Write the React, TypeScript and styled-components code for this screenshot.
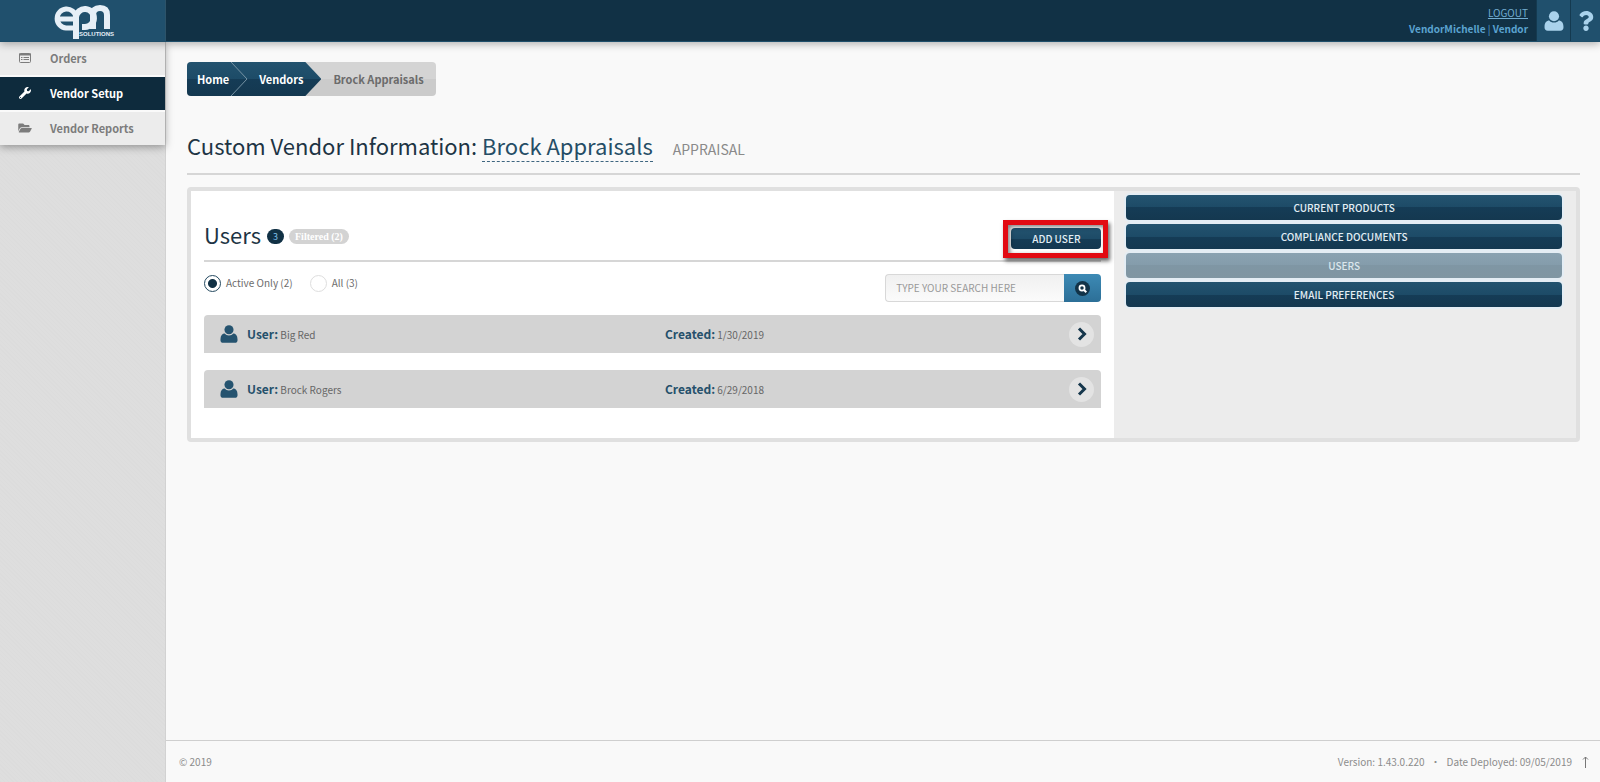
import React from "react";
import styled, { createGlobalStyle, css } from "styled-components";
import { FaWrench, FaFolderOpen, FaQuestion } from "react-icons/fa";

const GlobalStyle = createGlobalStyle`
  *, *::before, *::after { box-sizing: border-box; }
  body {
    margin: 0;
    background: #f9f9f9;
    color: #6c6c6c;
    font-family: "Noto Sans CJK SC", "Open Sans", sans-serif;
    font-size: 10px;
    line-height: 16px;
  }
  a { color: inherit; text-decoration: none; }
  button, input { font: inherit; }
  button { cursor: pointer; }
  h1, h2, ul, ol, p { margin: 0; padding: 0; font-weight: 400; }
  ul, ol { list-style: none; }
`;

const glossy = css`
  background: linear-gradient(#23536f, #1d4b67 50%, #153c56 50%, #143850);
`;

const Page = styled.div`
  display: flex;
  flex-direction: column;
  min-height: 100vh;
`;

const Header = styled.header`
  position: relative;
  z-index: 1;
  display: flex;
  height: 42px;
  background: #113145;
  border-bottom: 1px solid #1e4e6a;
  box-shadow: 0 2px 8px rgba(0, 0, 0, 0.3);
`;

const Brand = styled.a`
  display: flex;
  justify-content: center;
  width: 166px;
  background: #20506d;
  border-right: 1px solid #2d5369;
`;

const Account = styled.div`
  margin-left: auto;
  padding: 5px 8px 0 0;
  text-align: right;
  color: #5ba3d0;
`;

const Logout = styled.a`
  display: block;
  text-decoration: underline;
  color: #72acd0;
`;

const AccountName = styled.p`
  b { font-weight: 700; }
`;

const HeaderButton = styled.button<{ $wide?: boolean }>`
  display: flex;
  align-items: center;
  justify-content: center;
  width: ${(p) => (p.$wide ? "34px" : "30px")};
  padding: 0;
  border: 0;
  border-left: 1px solid #143a50;
  background: #20506d;
  color: #a9d2ec;
`;

const Body = styled.div`
  display: flex;
  flex: 1;
`;

const Sidebar = styled.aside`
  width: 166px;
  background: repeating-linear-gradient(45deg, #dcdcdc 0 1px, #dedede 1px 3px);
  border-right: 1px solid #d2d2d2;
`;

const Nav = styled.nav`
  display: flex;
  flex-direction: column;
  gap: 2px;
  background: #fafafa;
  box-shadow: 0 2px 8px rgba(0, 0, 0, 0.35);
`;

const NavItem = styled.a<{ $active?: boolean }>`
  display: flex;
  align-items: center;
  gap: 18px;
  height: 33px;
  padding: 0 0 2px 18px;
  font-size: 11px;
  font-weight: 700;
  background: ${(p) => (p.$active ? "#0e2b3d" : "#ececec")};
  color: ${(p) => (p.$active ? "#fff" : "#7c7c7c")};
  svg { width: 14px; }
`;

const Main = styled.div`
  display: flex;
  flex-direction: column;
  flex: 1;
  min-width: 0;
`;

const Content = styled.main`
  flex: 1;
  padding: 20px 20px 40px 21px;
`;

const Crumbs = styled.ol`
  display: flex;
  width: fit-content;
  height: 34px;
  border-radius: 4px;
  overflow: hidden;
  background: linear-gradient(#d4d4d4 50%, #cbcbcb 50%);
  font-size: 11px;
  line-height: 34px;
  font-weight: 700;
`;

const DarkCrumbs = styled.li`
  display: flex;
  gap: 1px;
  padding-right: 18px;
  color: #fff;
  clip-path: polygon(0 0, calc(100% - 16px) 0, 100% 50%, calc(100% - 16px) 100%, 0 100%);
  ${glossy}
  a { padding-left: 10px; }
`;

const CurrentCrumb = styled.li`
  padding: 0 12px;
  color: #6b6b6b;
`;

const PageTitle = styled.h1`
  display: flex;
  align-items: baseline;
  margin-top: 32px;
  padding-bottom: 7px;
  border-bottom: 2px solid #d6d6d6;
  font-size: 22px;
  line-height: 34px;
  color: #1d3444;
  white-space: pre;
`;

const VendorName = styled.a`
  color: #254d66;
  line-height: 32px;
  border-bottom: 1px dashed #3f6680;
`;

const VendorKind = styled.small`
  margin-left: 20px;
  font-size: 14px;
  color: #8a8a8a;
`;

const Panel = styled.div`
  display: grid;
  grid-template-columns: 2fr 1fr;
  margin-top: 12px;
  min-height: 254px;
  border: 4px solid #e0e0e0;
  border-radius: 4px;
  background: #ececec;
`;

const UsersPane = styled.section`
  padding: 28px 13px 30px 13px;
  background: #fff;
`;

const UsersHead = styled.div`
  display: flex;
  align-items: center;
  height: 43px;
  padding-bottom: 10px;
  border-bottom: 2px solid #d6d6d6;
`;

const UsersTitle = styled.h2`
  margin: 0 6px 2px 0;
  font-size: 22px;
  line-height: 30px;
  color: #1d3444;
`;

const Badge = styled.span<{ $muted?: boolean }>`
  margin: 4px 5px 0 0;
  padding: 0 6px;
  border-radius: 8px;
  font-size: 9px;
  line-height: 15px;
  background: ${(p) => (p.$muted ? "#d3d3d3" : "#113145")};
  color: ${(p) => (p.$muted ? "#fff" : "#7fc0ea")};
  ${(p) => p.$muted && 'font-family: "Liberation Serif", serif; font-size: 10px; font-weight: 700;'}
`;

const AddWrap = styled.div`
  position: relative;
  margin: 8px 0 0 auto;
`;

const AddButton = styled.button`
  display: block;
  width: 90px;
  height: 21px;
  padding: 0;
  border: 0;
  border-radius: 4px;
  color: #e2eef5;
  font-weight: 500;
  line-height: 21px;
  ${glossy}
`;

const Callout = styled.div`
  position: absolute;
  inset: -8px -7px -9px -8px;
  border: 5px solid #e20a12;
  box-shadow: 2px 3px 4px rgba(0, 0, 0, 0.6), inset 2px 2px 4px rgba(0, 0, 0, 0.5);
  pointer-events: none;
`;

const Filters = styled.div`
  display: flex;
  justify-content: space-between;
  align-items: flex-start;
  padding: 12px 0 13px;
`;

const RadioGroup = styled.div`
  display: flex;
  gap: 17px;
`;

const RadioLabel = styled.label`
  display: flex;
  align-items: center;
  gap: 5px;
  height: 18px;
`;

const Radio = styled.input`
  appearance: none;
  width: 17px;
  height: 17px;
  margin: 0;
  border: 1px solid #dedede;
  border-radius: 50%;
  background: #fff;
  &:checked {
    border-color: #24495f;
    background: radial-gradient(circle, #113145 4px, #fff 5px);
  }
`;

const Search = styled.form`
  display: flex;
  height: 28px;
`;

const SearchInput = styled.input`
  width: 179px;
  padding: 0 10px;
  border: 1px solid #d8d8d8;
  border-right: 0;
  border-radius: 4px 0 0 4px;
  background: linear-gradient(#f0f0f0, #fbfbfb);
  color: #777;
  &::placeholder { color: #999; opacity: 1; }
`;

const SearchButton = styled.button`
  display: flex;
  align-items: center;
  justify-content: center;
  width: 37px;
  padding: 0;
  border: 0;
  border-radius: 0 4px 4px 0;
  background: linear-gradient(#3d8ab5, #2c6f97);
`;

const UserList = styled.ul`
  display: grid;
  gap: 17px;
`;

const UserRow = styled.li`
  display: grid;
  grid-template-columns: 27px 418px 1fr 25px;
  align-items: center;
  height: 38px;
  padding: 0 7px 0 16px;
  border-radius: 4px 4px 0 0;
  background: #d3d3d3;
  color: #25536f;
`;

const Field = styled.p`
  line-height: 20px;
  color: #666;
  b { font-size: 12px; color: #25506b; }
`;

const OpenButton = styled.button`
  display: flex;
  align-items: center;
  justify-content: center;
  width: 25px;
  height: 25px;
  padding: 0;
  border: 0;
  border-radius: 50%;
  background: #e3e3e3;
`;

const Actions = styled.nav`
  display: flex;
  flex-direction: column;
  gap: 4px;
  padding: 4px 14px 4px 12px;
`;

const ActionButton = styled.button`
  height: 25px;
  padding: 0;
  border: 0;
  border-radius: 4px;
  color: #e2eef5;
  font-weight: 500;
  box-shadow: 0 0 0 2px #e4edf4;
  ${glossy}
  &:disabled {
    color: #dbe6ec;
    background: linear-gradient(#8aa2b1, #849cab 50%, #7f96a4 50%, #8096a2);
  }
`;

const Footer = styled.footer`
  display: flex;
  justify-content: space-between;
  height: 42px;
  padding: 13px 11px 0 13px;
  border-top: 1px solid #cfcfcf;
  color: #8c8c8c;
`;

const BuildInfo = styled.div`
  display: flex;
  gap: 6px;
`;

const TopLink = styled.a`
  display: flex;
  align-items: center;
  height: 16px;
  padding-left: 4px;
`;

const Logo = () => (
  <svg width="64" height="40" viewBox="0 0 64 40" role="img" aria-label="EPN Solutions">
    <g fill="none" stroke="#e6eff7" strokeWidth="6">
      <path d="M7 19 H25 V17 A9.500 9.500 0 1 0 15 28 H22" strokeWidth="5" />
      <path d="M25 39 V17 A9 9 0 1 1 34 27 H31" />
      <path d="M42 29 V15 Q42 8 49 8 Q56 8 56 15 V29" />
    </g>
    <text x="28" y="36" fontFamily="Liberation Sans" fontSize="6" fontWeight="700" fill="#e6eff7">SOLUTIONS</text>
  </svg>
);

const ListIcon = () => (
  <svg width="12" height="10" viewBox="0 0 12 10" fill="none" stroke="currentColor">
    <rect x=".5" y=".5" width="11" height="9" rx="1" />
    <path d="M0 1.500h12" strokeWidth="2" />
    <path d="M2 4.500h1.500M4.500 4.500h5.500M2 6.500h1.500M4.500 6.500h5.500" />
  </svg>
);

const PersonIcon = ({ size }: { size: number }) => (
  <svg width={size} height={size} viewBox="0 0 18 19" fill="currentColor">
    <path d="M4.500 9C2 9 0 11 0 15v.5A3 3 0 0 0 3 18.800h12a3 3 0 0 0 3-3.300V15c0-4-2-6-4.500-6C12.500 10.300 11 11 9 11S5.500 10.300 4.500 9z" />
    <circle cx="9" cy="5" r="4.800" />
  </svg>
);

const SearchIcon = () => (
  <svg width="15" height="15" viewBox="0 0 15 15">
    <circle cx="7.500" cy="7.500" r="7.500" fill="#123348" />
    <circle cx="7" cy="7" r="2.600" fill="none" stroke="#fff" strokeWidth="1.700" />
    <path d="M9 9l2.300 2.300" stroke="#fff" strokeWidth="2" />
  </svg>
);

const ChevronIcon = () => (
  <svg width="10" height="14" viewBox="0 0 10 14" fill="none" stroke="#16374c" strokeWidth="3">
    <path d="M2 1.500L7.500 7l-5.500 5.500" />
  </svg>
);

const CrumbSeparator = () => (
  <svg width="18" height="34" viewBox="0 0 18 34" fill="none" stroke="#7793a4" strokeWidth="1">
    <path d="M1 0l16 17L1 34" />
  </svg>
);

const ArrowUp = () => (
  <svg width="7" height="12" viewBox="0 0 7 12" fill="none" stroke="#777">
    <path d="M3.500 12V1M1 3.500L3.500 1 6 3.500" />
  </svg>
);

const users = [
  { name: "Big Red", created: "1/30/2019" },
  { name: "Brock Rogers", created: "6/29/2018" },
];

const actions = ["CURRENT PRODUCTS", "COMPLIANCE DOCUMENTS", "USERS", "EMAIL PREFERENCES"];

export default function App() {
  return (
    <Page>
      <GlobalStyle />
      <Header>
        <Brand href="#"><Logo /></Brand>
        <Account>
          <Logout href="#">LOGOUT</Logout>
          <AccountName><b>VendorMichelle</b> | <b>Vendor</b></AccountName>
        </Account>
        <HeaderButton $wide aria-label="Profile"><PersonIcon size={20} /></HeaderButton>
        <HeaderButton aria-label="Help"><FaQuestion size={20} /></HeaderButton>
      </Header>
      <Body>
        <Sidebar>
          <Nav>
            <NavItem href="#"><ListIcon />Orders</NavItem>
            <NavItem href="#" $active><FaWrench size={12} />Vendor Setup</NavItem>
            <NavItem href="#"><FaFolderOpen size={12} />Vendor Reports</NavItem>
          </Nav>
        </Sidebar>
        <Main>
          <Content>
            <Crumbs>
              <DarkCrumbs>
                <a href="#">Home</a>
                <CrumbSeparator />
                <a href="#">Vendors</a>
              </DarkCrumbs>
              <CurrentCrumb>Brock Appraisals</CurrentCrumb>
            </Crumbs>
            <PageTitle>
              {"Custom Vendor Information: "}
              <VendorName href="#">Brock Appraisals</VendorName>
              <VendorKind>APPRAISAL</VendorKind>
            </PageTitle>
            <Panel>
              <UsersPane>
                <UsersHead>
                  <UsersTitle>Users</UsersTitle>
                  <Badge>3</Badge>
                  <Badge $muted>Filtered (2)</Badge>
                  <AddWrap>
                    <AddButton>ADD USER</AddButton>
                    <Callout />
                  </AddWrap>
                </UsersHead>
                <Filters>
                  <RadioGroup>
                    <RadioLabel><Radio type="radio" name="show" defaultChecked />Active Only (2)</RadioLabel>
                    <RadioLabel><Radio type="radio" name="show" />All (3)</RadioLabel>
                  </RadioGroup>
                  <Search>
                    <SearchInput type="text" aria-label="Search users" placeholder="TYPE YOUR SEARCH HERE" />
                    <SearchButton type="button" aria-label="Search"><SearchIcon /></SearchButton>
                  </Search>
                </Filters>
                <UserList>
                  {users.map((u) => (
                    <UserRow key={u.name}>
                      <PersonIcon size={18} />
                      <Field><b>User:</b> {u.name}</Field>
                      <Field><b>Created:</b> {u.created}</Field>
                      <OpenButton aria-label={"Open " + u.name}><ChevronIcon /></OpenButton>
                    </UserRow>
                  ))}
                </UserList>
              </UsersPane>
              <Actions>
                {actions.map((a) => (
                  <ActionButton key={a} disabled={a === "USERS"}>{a}</ActionButton>
                ))}
              </Actions>
            </Panel>
          </Content>
          <Footer>
            <span>© 2019</span>
            <BuildInfo>
              <span>Version: 1.43.0.220</span>
              <span>•</span>
              <span>Date Deployed: 09/05/2019</span>
              <TopLink href="#" aria-label="Back to top"><ArrowUp /></TopLink>
            </BuildInfo>
          </Footer>
        </Main>
      </Body>
    </Page>
  );
}
